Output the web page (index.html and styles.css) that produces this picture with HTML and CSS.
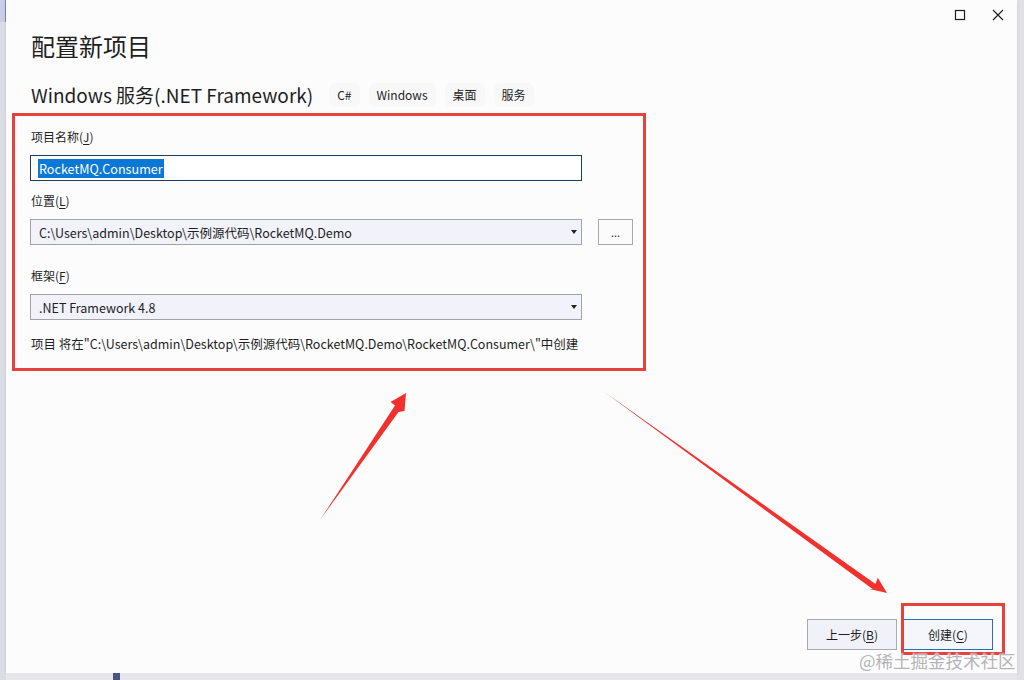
FILE: index.html
```html
<!DOCTYPE html>
<html lang="zh-CN">
<head>
<meta charset="utf-8">
<title>配置新项目</title>
<link rel="stylesheet" href="styles.css">
</head>
<body>
<div class="desk-left"><div class="desk-left-top"></div></div>
<div class="desk-main">
  <div class="window">
    <div class="titlebar">
      <div class="ctl"><svg width="12" height="12" viewBox="0 0 12 12"><rect x="1.5" y="1.5" width="9" height="9" fill="none" stroke="#1a1a1a" stroke-width="1.2"/></svg></div>
      <div class="ctl"><svg width="12" height="12" viewBox="0 0 12 12"><path d="M1 1 L11 11 M11 1 L1 11" stroke="#1a1a1a" stroke-width="1.1"/></svg></div>
    </div>
    <div class="content">
      <h1 class="title">配置新项目</h1>
      <div class="subtitle-row">
        <span class="subtitle">Windows 服务(.NET Framework)</span>
        <span class="tag tag-first">C#</span>
        <span class="tag">Windows</span>
        <span class="tag">桌面</span>
        <span class="tag">服务</span>
      </div>
      <div class="form-box">
        <div class="label">项目名称(<u>J</u>)</div>
        <div class="input input-focus"><span class="sel">RocketMQ.Consumer</span></div>
        <div class="label gap1">位置(<u>L</u>)</div>
        <div class="row">
          <div class="input combo"><span>C:\Users\admin\Desktop\示例源代码\RocketMQ.Demo</span><span class="caret"></span></div>
          <div class="browse">...</div>
        </div>
        <div class="label gap2">框架(<u>F</u>)</div>
        <div class="input combo"><span>.NET Framework 4.8</span><span class="caret"></span></div>
        <div class="info">项目 将在"C:\Users\admin\Desktop\示例源代码\RocketMQ.Demo\RocketMQ.Consumer\"中创建</div>
      </div>
      <div class="spacer"></div>
      <div class="buttons">
        <div class="btn">上一步(<u>B</u>)</div>
        <div class="btn btn-primary">创建(<u>C</u>)</div>
      </div>
    </div>
    <div class="mark-box"></div>
    <div class="watermark">@稀土掘金技术社区</div>
    <svg class="arrows" width="1011" height="673" viewBox="6 0 1011 673">
      <polygon fill="#f2302d" points="320,520 398.5,412 404.5,411 406,393 390.5,402 395,405.5"/>
      <polygon fill="#f2302d" points="603,391 872.5,589 869.6,589.1 887,593 877.8,577.7 875.5,584"/>
    </svg>
  </div>
  <div class="desk-bottom"><div class="taskbit"></div></div>
</div>
<div class="desk-right"></div>
</body>
</html>
```
FILE: styles.css
```css
html, body {
  margin: 0;
  padding: 0;
}
body {
  width: 1024px;
  height: 680px;
  overflow: hidden;
  display: flex;
  background: #e4e4e8;
  font-family: "Noto Sans CJK SC", "Noto Sans", sans-serif;
  color: #1e1e1e;
}
.desk-left {
  width: 6px;
  background: #dcdde2;
  flex: none;
}
.desk-left-top {
  height: 22px;
  background: #c9cde6;
  border-right: 1px solid #7d88c6;
}
.desk-main {
  width: 1011px;
  flex: none;
  display: flex;
  flex-direction: column;
}
.desk-right {
  flex: 1;
  background: #e2e2e6;
}
.desk-bottom {
  flex: 1;
  background: #e6e6ea;
  position: relative;
}
.taskbit {
  margin-left: 107px;
  width: 7px;
  height: 7px;
  background: #4b5380;
}
.window {
  width: 1011px;
  height: 673px;
  background: #fcfcfd;
  position: relative;
  display: flex;
  flex-direction: column;
  box-shadow: 0 1px 3px rgba(0,0,0,0.12);
}
.titlebar {
  height: 30px;
  display: flex;
  justify-content: flex-end;
}
.ctl {
  width: 38px;
  height: 30px;
  display: flex;
  align-items: center;
  justify-content: center;
}
.content {
  flex: 1;
  display: flex;
  flex-direction: column;
  padding-left: 25px;
}
.title {
  margin: 0;
  font-size: 24px;
  line-height: 32px;
  font-weight: normal;
}
.subtitle-row {
  margin-top: 20px;
  height: 26px;
  display: flex;
  align-items: center;
}
.subtitle {
  font-size: 19px;
  line-height: 26px;
}
.tag {
  font-size: 12px;
  line-height: 24px;
  padding: 0 8px;
  margin-left: 9px;
  background: #f8f8f9;
  border-radius: 6px;
}
.tag-first {
  margin-left: 16px;
}
.form-box {
  margin-top: 5px;
  margin-left: -19px;
  width: 613px;
  border: 3px solid #e8403a;
  padding: 12px 0 15px 15px;
}
.label {
  font-size: 12px;
  line-height: 18px;
  padding-left: 1px;
}
.label u, .btn u { text-decoration: underline; text-underline-offset: 2px; }
.gap1 { margin-top: 11px; }
.gap2 { margin-top: 22px; }
.input {
  margin-top: 9px;
  height: 24px;
  border: 1px solid #1f3b5c;
  background: #ffffff;
  display: flex;
  align-items: center;
  padding-left: 7px;
  width: 543px;
  font-size: 12.6px;
  flex: none;
}
.sel {
  background: #0a78d4;
  color: #ffffff;
  line-height: 19px;
  padding: 0 1px;
}
.combo {
  border-color: #a2a2a8;
  background: #f1f2fa;
  justify-content: space-between;
  font-size: 12.5px;
  padding-left: 8px;
  width: 542px;
}
.row {
  display: flex;
  align-items: flex-end;
}
.caret {
  width: 0;
  height: 0;
  border-left: 3px solid transparent;
  border-right: 3px solid transparent;
  border-top: 4px solid #222;
  margin-right: 4px;
}
.browse {
  margin-left: 16px;
  width: 33px;
  height: 24px;
  border: 1px solid #a8a8ac;
  background: #fbfbfc;
  font-size: 11px;
  display: flex;
  align-items: center;
  justify-content: center;
  line-height: 1;
}
.info {
  margin-top: 15px;
  font-size: 12.5px;
  line-height: 18px;
  padding-left: 1px;
}
.spacer { flex: 1; }
.buttons {
  display: flex;
  justify-content: flex-end;
  gap: 6px;
  margin-right: 24px;
  margin-bottom: 23px;
}
.btn {
  width: 88px;
  height: 29px;
  border: 1px solid #a8a8ae;
  background: #f1f2f9;
  font-size: 12px;
  display: flex;
  align-items: center;
  justify-content: center;
}
.btn-primary {
  border-color: #2a6db8;
  background: #f4f6fb;
}
.mark-box {
  position: absolute;
  left: 895px;
  top: 603px;
  width: 98px;
  height: 46px;
  border: 3px solid #e8403a;
}
.watermark {
  position: absolute;
  left: 853px;
  top: 650px;
  font-size: 17.5px;
  line-height: 22px;
  color: #b4b4b8;
  text-shadow: 0 0 2px #ffffff, 0 0 2px #ffffff;
  white-space: nowrap;
}
.arrows {
  position: absolute;
  left: 0;
  top: 0;
  pointer-events: none;
}
```
